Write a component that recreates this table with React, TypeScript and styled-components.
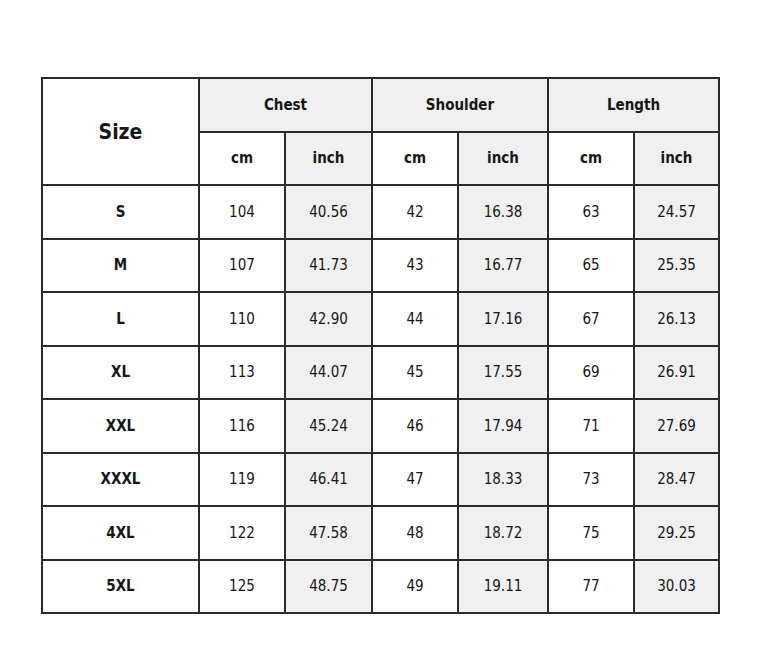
import React from "react";
import styled, { createGlobalStyle } from "styled-components";

const rows: Array<[string, number, string, number, string, number, string]> = [
  ["S", 104, "40.56", 42, "16.38", 63, "24.57"],
  ["M", 107, "41.73", 43, "16.77", 65, "25.35"],
  ["L", 110, "42.90", 44, "17.16", 67, "26.13"],
  ["XL", 113, "44.07", 45, "17.55", 69, "26.91"],
  ["XXL", 116, "45.24", 46, "17.94", 71, "27.69"],
  ["XXXL", 119, "46.41", 47, "18.33", 73, "28.47"],
  ["4XL", 122, "47.58", 48, "18.72", 75, "29.25"],
  ["5XL", 125, "48.75", 49, "19.11", 77, "30.03"],
];

const groups = ["Chest", "Shoulder", "Length"];

const GlobalStyle = createGlobalStyle`
  html, body {
    margin: 0;
    background: #fff;
  }
  body {
    font-family: "DejaVu Sans Condensed", "DejaVu Sans", sans-serif;
    color: #161616;
  }
`;

const Page = styled.main`
  width: 764px;
  height: 669px;
  padding: 77px 0 0 41px;
  box-sizing: border-box;
`;

const Grid = styled.div`
  display: inline-grid;
  grid-template-columns: 155px 84px 85px 84px 88px 84px 83px;
  grid-auto-rows: 51.5px;
  gap: 2px;
  padding: 2px;
  background: #2b2b2b;
`;

const Cell = styled.div<{ $shade?: boolean; $bold?: boolean; $big?: boolean }>`
  display: flex;
  align-items: center;
  justify-content: center;
  background: ${p => (p.$shade ? "#f0f0f0" : "#fff")};
  font-size: ${p => (p.$big ? "21px" : "15px")};
  font-weight: ${p => (p.$bold ? 700 : 400)};
`;

const SizeHead = styled(Cell)`
  grid-row: span 2;
`;

const GroupHead = styled(Cell)`
  grid-column: span 2;
`;

export default function App() {
  return (
    <Page>
      <GlobalStyle />
      <Grid>
        <SizeHead $bold $big>Size</SizeHead>
        {groups.map(g => (
          <GroupHead key={g} $shade $bold>{g}</GroupHead>
        ))}
        {groups.map(g => (
          <React.Fragment key={g}>
            <Cell $bold>cm</Cell>
            <Cell $bold $shade>inch</Cell>
          </React.Fragment>
        ))}
        {rows.map(([size, ...vals]) => (
          <React.Fragment key={size}>
            <Cell $bold>{size}</Cell>
            {vals.map((v, i) => (
              <Cell key={i} $shade={i % 2 === 1}>{v}</Cell>
            ))}
          </React.Fragment>
        ))}
      </Grid>
    </Page>
  );
}
